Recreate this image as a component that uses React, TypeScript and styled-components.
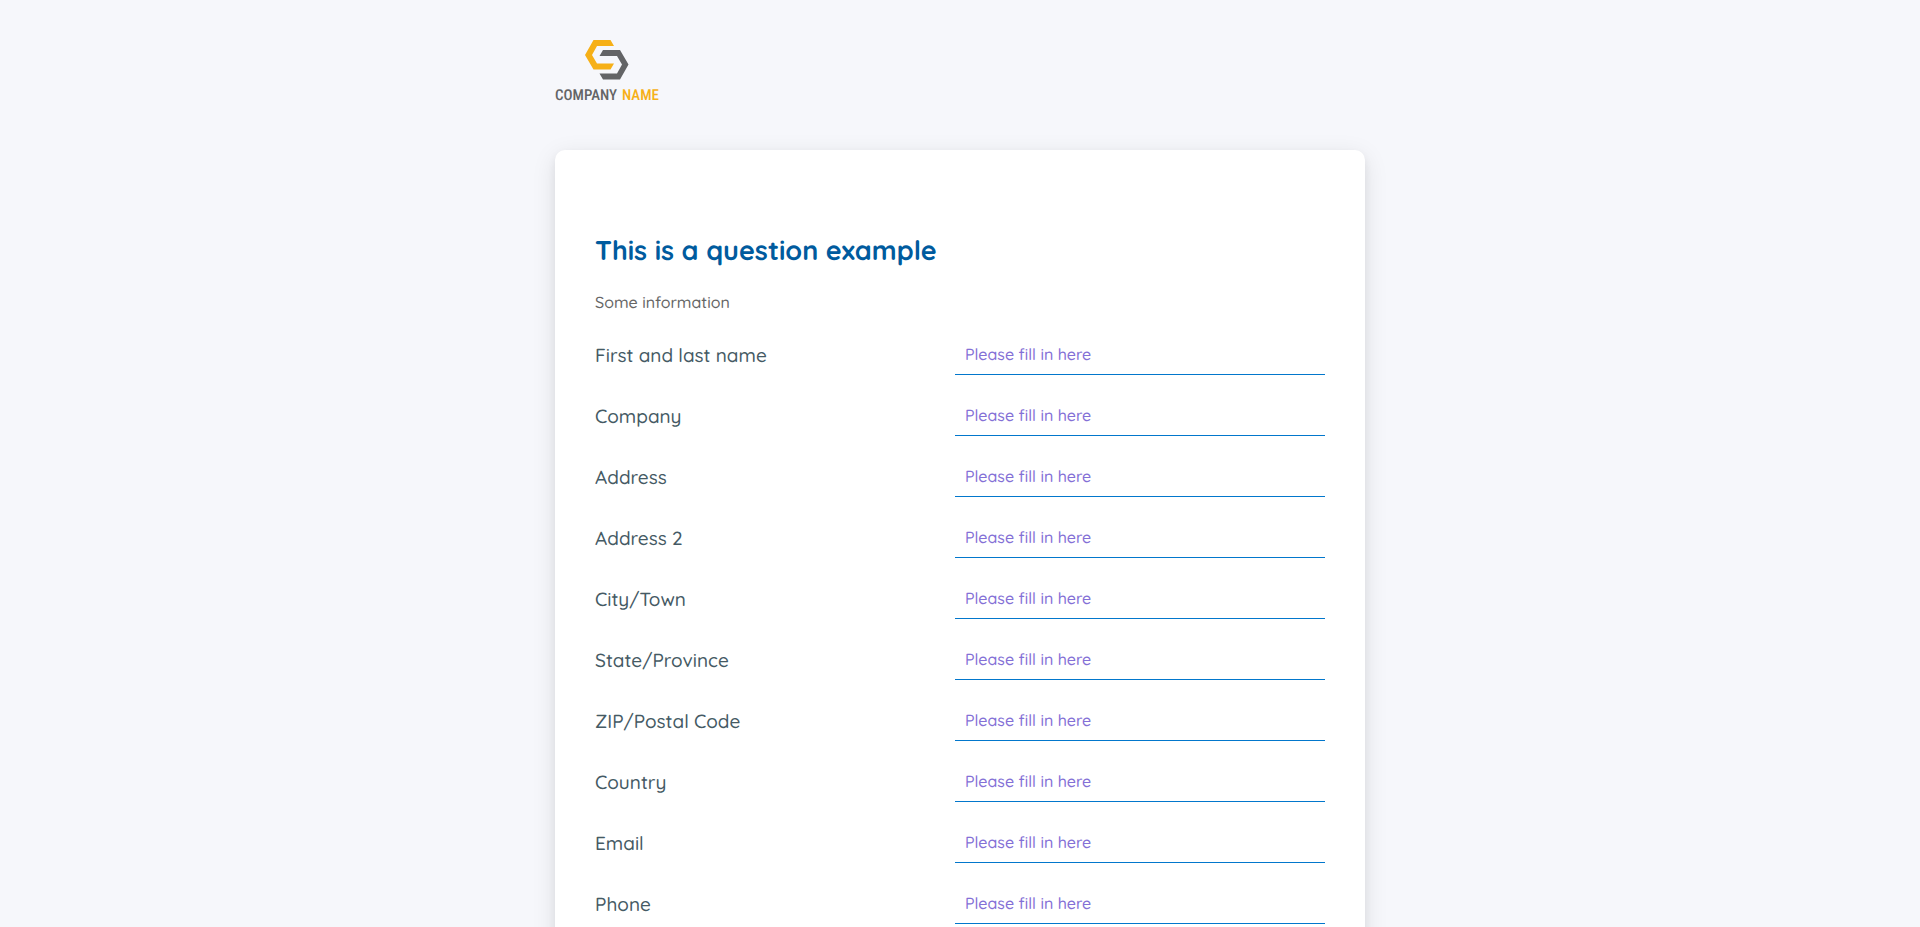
import React from "react";
import styled, { createGlobalStyle } from "styled-components";

const GlobalStyle = createGlobalStyle`
  *, *::before, *::after { box-sizing: border-box; }
  body {
    margin: 0;
    background: #f6f7fb;
    font-family: Quicksand, Lato, sans-serif;
    font-weight: 500;
    text-rendering: geometricPrecision;
  }
`;

const Page = styled.div`
  width: 100%;
  max-width: 842px;
  margin: 0 auto;
  padding: 40px 16px;
`;

const Header = styled.header`
  margin-bottom: 50px;
`;

const Logo = styled.svg`
  display: block;
  width: 105px;
  height: 60px;
  overflow: visible;
`;

const LogoText = styled.text`
  font-family: "Roboto Condensed", "Liberation Sans Narrow", Roboto, sans-serif;
  font-size: 15px;
  font-weight: 500;
`;

const Card = styled.main`
  padding: 80px 40px;
  border-radius: 10px;
  background: #fff;
  box-shadow: 0 4px 8px rgba(0, 0, 0, 0.06), 0 6px 24px rgba(0, 0, 0, 0.1);
`;

const Title = styled.h1`
  margin: 0 0 22px;
  color: #005b9e;
  font-size: 27px;
  line-height: 40px;
  font-weight: 700;
`;

const Info = styled.p`
  margin: 0 0 22px;
  color: #666;
  font-size: 16px;
  line-height: 20px;
`;

const Form = styled.form`
  display: flex;
  flex-direction: column;
  gap: 20px;
`;

const Row = styled.div`
  display: grid;
  grid-template-columns: 360px 1fr;
  align-items: center;
`;

const Label = styled.label`
  color: #455a64;
  font-size: 19px;
  line-height: 24px;
`;

const Field = styled.input`
  width: 100%;
  height: 41px;
  padding: 0 10px;
  border: 0;
  border-bottom: 1px solid #0277cc;
  border-radius: 0;
  outline: 0;
  background: transparent;
  color: #455a64;
  font: inherit;
  font-size: 16px;
  text-rendering: inherit;

  &::placeholder {
    color: #8470d6;
    opacity: 1;
  }
`;

const fields = [
  { id: "name", label: "First and last name" },
  { id: "company", label: "Company" },
  { id: "address", label: "Address" },
  { id: "address2", label: "Address 2" },
  { id: "city", label: "City/Town" },
  { id: "state", label: "State/Province" },
  { id: "zip", label: "ZIP/Postal Code" },
  { id: "country", label: "Country" },
  { id: "email", label: "Email", type: "email" },
  { id: "phone", label: "Phone", type: "tel" },
];

function CompanyLogo() {
  return (
    <Logo viewBox="0 0 105 60" role="img" aria-label="Company name">
      <path fill="#f6b017" d="M38.5 0H55.5L59 6H42L37 15L42 23.5H59L55.5 29.5H38.5L30 15Z" />
      <path fill="#636466" d="M48 10H65L73.5 24.5L65 39.5H48L44.5 33.5H62L67 24.5L62 16H44.5Z" />
      <LogoText x="0" y="60" fill="#636466">COMPANY</LogoText>
      <LogoText x="67" y="60" fill="#f6b017">NAME</LogoText>
    </Logo>
  );
}

export default function App() {
  return (
    <>
      <GlobalStyle />
      <Page>
        <Header>
          <CompanyLogo />
        </Header>
        <Card>
          <Title>This is a question example</Title>
          <Info>Some information</Info>
          <Form>
            {fields.map(({ id, label, type = "text" }) => (
              <Row key={id}>
                <Label htmlFor={id}>{label}</Label>
                <Field id={id} name={id} type={type} placeholder="Please fill in here" />
              </Row>
            ))}
          </Form>
        </Card>
      </Page>
    </>
  );
}
